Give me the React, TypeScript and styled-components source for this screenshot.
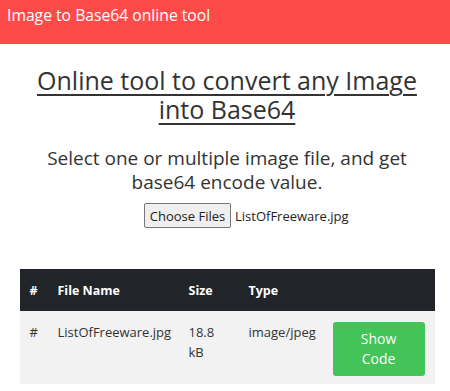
import React from "react";
import styled, { createGlobalStyle } from "styled-components";

const Global = createGlobalStyle`
  html, body { margin: 0; padding: 0; background: #fff; }
  body { font-family: "Open Sans", "Noto Sans", sans-serif; color: #212529; }
`;

const Page = styled.div`
  display: flex;
  flex-direction: column;
  width: 450px;
`;

const TopBar = styled.header`
  height: 44px;
  box-sizing: border-box;
  background: #ff4a4a;
  color: #fff;
  font-size: 15.7px;
  line-height: 22px;
  padding: 4px 7px 0;
`;

const Main = styled.main`
  display: flex;
  flex-direction: column;
  align-items: center;
  padding: 22px 19px 0 23px;
`;

const Title = styled.h1`
  margin: 0;
  font-weight: 400;
  font-size: 25px;
  line-height: 29px;
  text-align: center;
  text-decoration: underline;
  text-decoration-thickness: 2px;
  text-underline-offset: 4px;
  color: #333;
  width: 400px;
`;

const Subtitle = styled.p`
  margin: 22px 0 0;
  font-size: 19px;
  line-height: 24px;
  text-align: center;
  color: #333;
  width: 380px;
`;

const FileRow = styled.div`
  display: flex;
  align-items: center;
  gap: 4px;
  width: 166px;
  margin-top: 9px;
  font-size: 13px;
  color: #222;
  white-space: nowrap;
`;

const FileButton = styled.button`
  flex: none;
  font-family: inherit;
  font-size: 13px;
  height: 25px;
  width: 87px;
  padding: 0;
  background: #efefef;
  border: 1px solid #767676;
  border-radius: 2px;
  color: #222;
`;

const Table = styled.table`
  flex: none;
  margin-top: 41px;
  width: 415px;
  border-collapse: collapse;
  table-layout: fixed;
  font-size: 13px;
`;

const HeadCell = styled.th`
  background: #212529;
  color: #fff;
  font-weight: 700;
  font-size: 12.5px;
  text-align: left;
  height: 42px;
  padding: 0 10px;
  box-sizing: border-box;
`;

const Cell = styled.td`
  background: #f2f2f2;
  color: #333;
  vertical-align: top;
  padding: 11px 10px 8px;
  line-height: 20px;
`;

const ShowButton = styled.button`
  width: 92px;
  height: 54px;
  border: none;
  border-radius: 3px;
  background: #42c458;
  color: #fff;
  font-family: inherit;
  font-size: 14px;
  line-height: 20px;
  padding: 7px 20px;
`;

export default function App() {
  return (
    <Page>
      <Global />
      <TopBar>Image to Base64 online tool</TopBar>
      <Main>
        <Title>Online tool to convert any Image into Base64</Title>
        <Subtitle>Select one or multiple image file, and get base64 encode value.</Subtitle>
        <FileRow>
          <FileButton>Choose Files</FileButton>
          <span>ListOfFreeware.jpg</span>
        </FileRow>
        <Table>
          <colgroup>
            <col style={{ width: 28 }} />
            <col style={{ width: 131 }} />
            <col style={{ width: 60 }} />
            <col style={{ width: 84 }} />
            <col style={{ width: 112 }} />
          </colgroup>
          <thead>
            <tr>
              <HeadCell>#</HeadCell>
              <HeadCell>File Name</HeadCell>
              <HeadCell>Size</HeadCell>
              <HeadCell>Type</HeadCell>
              <HeadCell></HeadCell>
            </tr>
          </thead>
          <tbody>
            <tr>
              <Cell>#</Cell>
              <Cell>ListOfFreeware.jpg</Cell>
              <Cell>18.8 kB</Cell>
              <Cell>image/jpeg</Cell>
              <Cell>
                <ShowButton>Show Code</ShowButton>
              </Cell>
            </tr>
          </tbody>
        </Table>
      </Main>
    </Page>
  );
}
